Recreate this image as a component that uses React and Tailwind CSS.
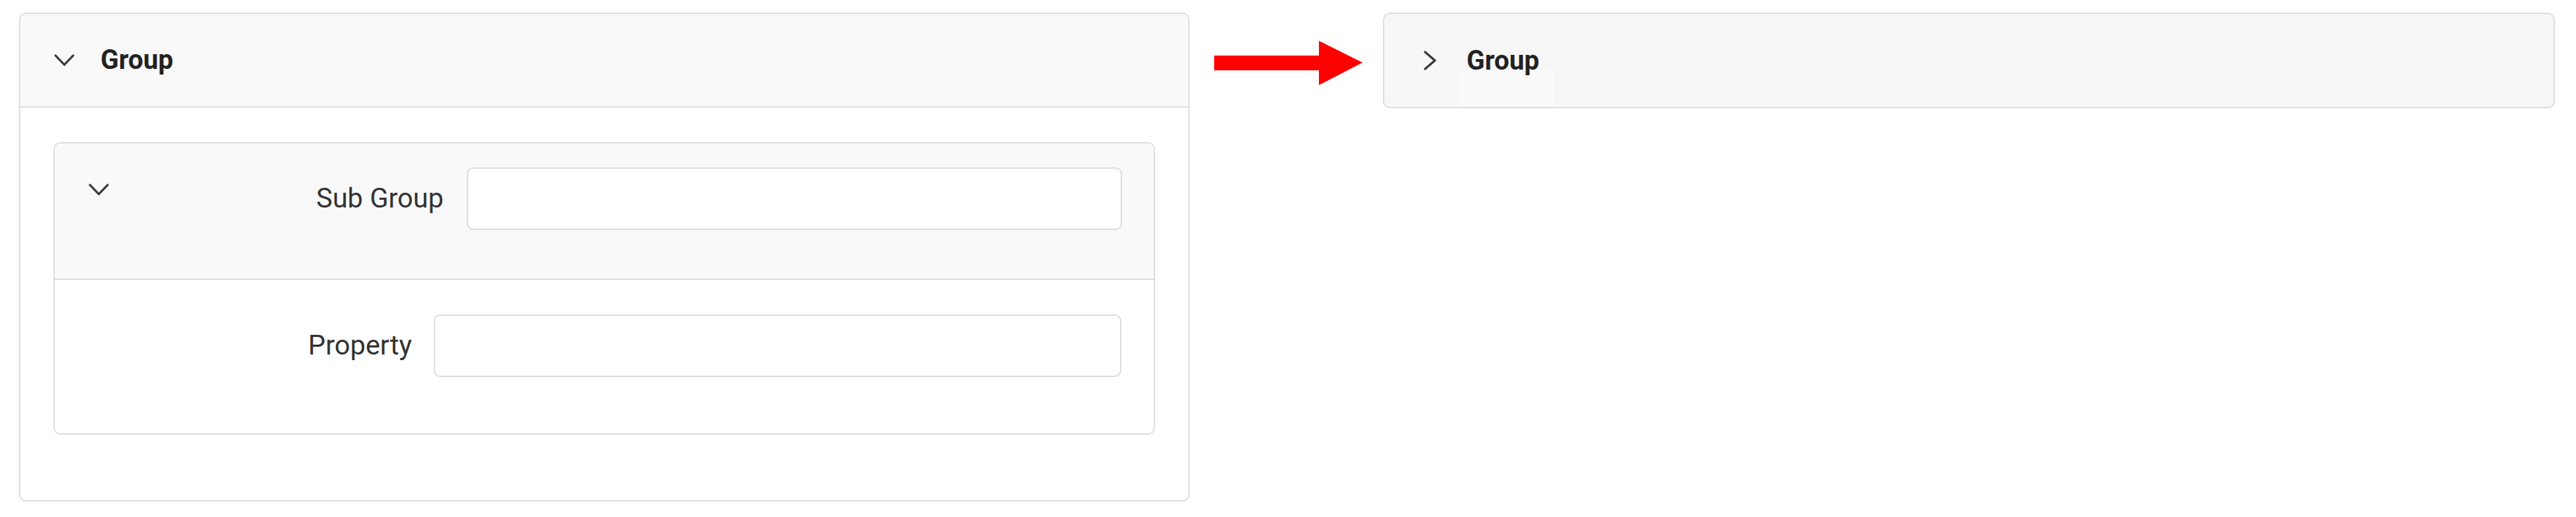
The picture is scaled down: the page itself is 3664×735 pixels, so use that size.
const ChevronDown = ({ className }) => (
  <svg viewBox="0 0 29 19" className={className} fill="none" stroke="#3a3a3a" strokeWidth="3.2" strokeLinecap="round" strokeLinejoin="round">
    <polyline points="2,3 14.5,16 27,3" />
  </svg>
)

const ChevronRight = ({ className }) => (
  <svg viewBox="0 0 20 28" className={className} fill="none" stroke="#3a3a3a" strokeWidth="3.2" strokeLinecap="round" strokeLinejoin="round">
    <polyline points="3,2 17,14 3,26" />
  </svg>
)

const Arrow = () => (
  <svg viewBox="0 0 211 63" className="w-[211px] h-[63px] mt-[40px] ml-[35px] shrink-0">
    <polygon points="0,21 149,21 149,0 211,31 149,63 149,42 0,42" fill="#ff0000" />
  </svg>
)

function Field({ label, labelWidth, inputWidth, gap }) {
  return (
    <div className="flex items-center">
      <div className={`${labelWidth} text-right text-[39px] text-[#333] leading-none`}>{label}</div>
      <div className={gap} />
      <input className={`${inputWidth} h-[89px] border-2 border-[#dedede] rounded-[9px] bg-white outline-none`} />
    </div>
  )
}

export default function App() {
  return (
    <div className="flex items-start pt-[18px] pl-[27px] pr-[30px] bg-white font-[Roboto,sans-serif]">
      <div className="w-[1665px] shrink-0 border-2 border-[#dedede] rounded-[10px] overflow-hidden">
        <div className="h-[133px] flex items-center pl-[48px] bg-[#f9f9f9] border-b-2 border-[#dedede]">
          <ChevronDown className="w-[29px] h-[19px]" />
          <span className="ml-[37px] text-[38px] font-bold text-[#222]">Group</span>
        </div>
        <div className="pt-[49px] px-[47px] pb-[93px] bg-white">
          <div className="border-2 border-[#dedede] rounded-[10px] overflow-hidden">
            <div className="flex items-start pl-[48px] pt-[34px] pb-[69px] bg-[#f9f9f9] border-b-2 border-[#dedede]">
              <ChevronDown className="w-[29px] h-[19px] mt-[22px]" />
              <Field label="Sub Group" labelWidth="w-[476px]" gap="w-[33px]" inputWidth="w-[932px]" />
            </div>
            <div className="pl-[78px] pt-[49px] pb-[80px] bg-white">
              <Field label="Property" labelWidth="w-[430px]" gap="w-[31px]" inputWidth="w-[978px]" />
            </div>
          </div>
        </div>
      </div>

      <div className="w-[275px] shrink-0">
        <Arrow />
      </div>

      <div className="flex-1 h-[136px] border-2 border-[#dedede] rounded-[10px] overflow-hidden bg-[image:repeating-conic-gradient(#efefef_0_25%,#ffffff_0_50%)] bg-[length:2px_2px]">
        <div className="h-full flex items-center pl-[50px]">
          <div className="w-[29px] flex justify-center">
            <ChevronRight className="w-[20px] h-[28px]" />
          </div>
          <div className="relative ml-[38px] self-stretch flex items-center">
            <span className="relative z-10 text-[38px] font-bold text-[#222]">Group</span>
            <div className="absolute left-[-11px] right-[-22px] top-[80px] bottom-0 bg-[#fafafa]" />
          </div>
        </div>
      </div>
    </div>
  )
}
